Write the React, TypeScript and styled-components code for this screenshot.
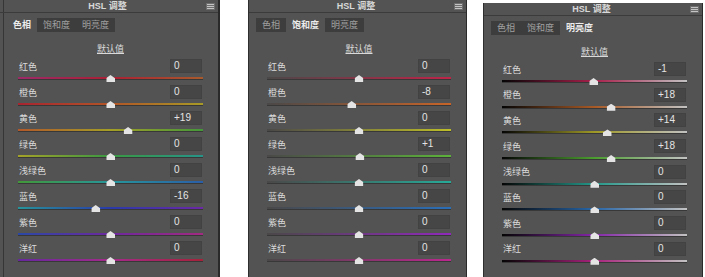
import React from 'react';
import styled, { createGlobalStyle } from 'styled-components';

type Kind = 'hue' | 'sat' | 'lum';

const NAMES = ['红色', '橙色', '黄色', '绿色', '浅绿色', '蓝色', '紫色', '洋红'];
const TABS = ['色相', '饱和度', '明亮度'];

// left / middle / right stops of each hue slider
const HUE_STOPS = [
  ['#9c2a68', '#aa2034', '#a85a2c'],
  ['#a82430', '#b25426', '#a89a26'],
  ['#b2582a', '#a49e26', '#44983a'],
  ['#a4a228', '#3a9842', '#269488'],
  ['#429838', '#26969a', '#2a5ea8'],
  ['#26949a', '#2a3aa8', '#6c28a6'],
  ['#2a48a6', '#6c289e', '#a22a82'],
  ['#66289e', '#a42a8a', '#a6223a'],
];
const SAT_COLORS = ['#be2448', '#c86428', '#bebe28', '#5cb23a', '#26aa98', '#2a6eb8', '#9028bc', '#bc268e'];
const LUM_COLORS = ['#a8204c', '#a85a26', '#9e9826', '#4c9e30', '#24988a', '#2866a8', '#8426a8', '#a8227c'];

const trackGradient = (kind: Kind, i: number) => {
  if (kind === 'hue') {
    const [a, b, c] = HUE_STOPS[i];
    return `linear-gradient(to right, ${a}, ${b} 50%, ${c})`;
  }
  if (kind === 'sat') return `linear-gradient(to right, #4a4848, ${SAT_COLORS[i]})`;
  return `linear-gradient(to right, #050505, ${LUM_COLORS[i]} 50%, #c2c2c2)`;
};

const formatValue = (v: number) => (v > 0 ? `+${v}` : `${v}`);

const GlobalStyle = createGlobalStyle`
  html, body {
    margin: 0;
    padding: 0;
    background: #fff;
  }
  body {
    font-family: "Noto Sans CJK SC", "Noto Sans", sans-serif;
  }
`;

const Page = styled.div`
  display: flex;
  align-items: flex-start;
  width: 705px;
  height: 277px;
  overflow: hidden;
`;

const Panel = styled.div<{ $w: number; $ml: number; $mt: number; $cut?: boolean }>`
  flex-shrink: 0;
  width: ${(p) => p.$w}px;
  height: 290px;
  margin-left: ${(p) => p.$ml}px;
  margin-top: ${(p) => p.$mt}px;
  box-sizing: border-box;
  background: #535353;
  border-left: ${(p) => (p.$cut ? 'none' : '1px solid #2e2e2e')};
  border-right: ${(p) => (p.$cut ? '2px' : '1px')} solid #2a2a2a;
  box-shadow: ${(p) => (p.$cut ? 'inset 3px 0 0 #535353, inset 4px 0 0 #363636' : 'none')};
  display: flex;
  flex-direction: column;
`;

const Header = styled.div`
  height: 12px;
  border-bottom: 1px solid #3b3b3b;
  display: grid;
  grid-template-columns: 1fr auto 1fr;
  align-items: center;
  padding: 0 3px 0 0;
`;

const Title = styled.div`
  grid-column: 2;
  font-family: "Liberation Sans", "Noto Sans CJK SC", sans-serif;
  font-size: 9px;
  font-weight: bold;
  line-height: 12px;
  color: #d8d8d8;
`;

const MenuIcon = styled.svg`
  grid-column: 3;
  justify-self: end;
  display: block;
`;

const TabStrip = styled.div`
  display: flex;
  padding: 5px 0 0 7px;
`;

const Tab = styled.div<{ $active: boolean }>`
  height: 14px;
  padding: 0 6px;
  font-size: 9px;
  line-height: 14px;
  white-space: nowrap;
  background: ${(p) => (p.$active ? 'transparent' : '#3d3d3d')};
  color: ${(p) => (p.$active ? '#ececec' : '#a0a0a0')};
  font-weight: ${(p) => (p.$active ? 'bold' : 'normal')};
`;

const Body = styled.div`
  padding: 0 16px 0 19px;
  display: flex;
  flex-direction: column;
`;

const DefaultLink = styled.div`
  margin-top: 11px;
  align-self: center;
  font-size: 9px;
  line-height: 12px;
  color: #dadada;
  text-decoration: underline;
`;

const Rows = styled.div`
  margin-top: 4px;
  display: flex;
  flex-direction: column;
`;

const Row = styled.div<{ $h: number }>`
  height: ${(p) => p.$h}px;
  flex-shrink: 0;
`;

const RowTop = styled.div`
  height: 14px;
  display: flex;
  align-items: center;
  justify-content: space-between;
`;

const Label = styled.span`
  font-size: 9px;
  color: #dcdcdc;
`;

const ValueBox = styled.div`
  width: 32px;
  height: 14px;
  box-sizing: border-box;
  padding-left: 3px;
  background: #464646;
  border: 1px solid #424242;
  font-family: "Liberation Sans", sans-serif;
  font-size: 10px;
  line-height: 12px;
  color: #e4e4e4;
`;

const Track = styled.div<{ $bg: string }>`
  position: relative;
  height: 2px;
  margin: 4px -1px 0 -1px;
  background: ${(p) => p.$bg};
  box-shadow: 0 1px 0 rgba(30, 30, 30, 0.5);
`;

const Thumb = styled.div`
  position: absolute;
  top: -2px;
  width: 9px;
  height: 7px;
  transform: translateX(-50%);
  background: #e4e4e4;
  clip-path: polygon(50% 0, 100% 45%, 100% 100%, 0 100%, 0 45%);
`;

type PanelProps = {
  kind: Kind;
  active: number;
  values: number[];
  w: number;
  ml: number;
  mt: number;
  rowH: number;
  cut?: boolean;
};

const HslPanel: React.FC<PanelProps> = ({ kind, active, values, w, ml, mt, rowH, cut }) => (
  <Panel $w={w} $ml={ml} $mt={mt} $cut={cut}>
    <Header>
      <Title>HSL 调整</Title>
      <MenuIcon width="9" height="7" viewBox="0 0 9 7">
        <rect x="0" y="0" width="9" height="7" fill="#6e6e6e" />
        <rect x="1" y="1" width="7" height="1" fill="#c4c4c4" />
        <rect x="1" y="3" width="7" height="1" fill="#c4c4c4" />
        <rect x="1" y="5" width="7" height="1" fill="#c4c4c4" />
      </MenuIcon>
    </Header>
    <TabStrip>
      {TABS.map((t, i) => (
        <Tab key={t} $active={i === active}>
          {t}
        </Tab>
      ))}
    </TabStrip>
    <Body>
      <DefaultLink>默认值</DefaultLink>
      <Rows>
        {NAMES.map((name, i) => (
          <Row key={name} $h={rowH}>
            <RowTop>
              <Label>{name}</Label>
              <ValueBox>{formatValue(values[i])}</ValueBox>
            </RowTop>
            <Track $bg={trackGradient(kind, i)}>
              <Thumb style={{ left: `calc(50% + ${values[i] * 0.5}%)` }} />
            </Track>
          </Row>
        ))}
      </Rows>
    </Body>
  </Panel>
);

export default function App() {
  return (
    <>
      <GlobalStyle />
      <Page>
        <HslPanel kind="hue" active={0} values={[0, 0, 19, 0, 0, -16, 0, 0]} w={220} ml={0} mt={0} rowH={26} cut />
        <HslPanel kind="sat" active={1} values={[0, -8, 0, 1, 0, 0, 0, 0]} w={219} ml={28} mt={0} rowH={26} />
        <HslPanel kind="lum" active={2} values={[-1, 18, 14, 18, 0, 0, 0, 0]} w={220} ml={16} mt={3} rowH={25.7} />
      </Page>
    </>
  );
}
